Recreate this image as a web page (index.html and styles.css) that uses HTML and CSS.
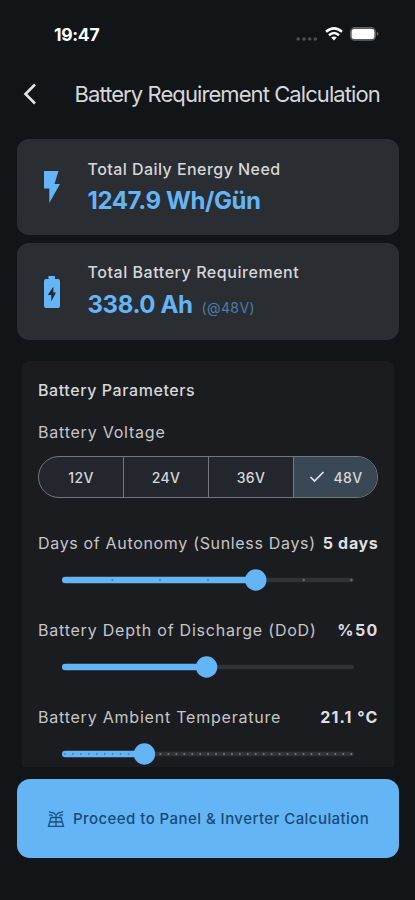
FILE: index.html
```html
<!DOCTYPE html>
<html lang="en">
<head>
<meta charset="utf-8">
<meta name="viewport" content="width=device-width, initial-scale=1">
<title>Battery Requirement Calculation</title>
<link rel="stylesheet" href="styles.css">
</head>
<body>
<div class="screen">
  <div class="status">
    <span class="time">19:47</span>
    <div class="signals">
      <svg class="dots" width="22" height="4" viewBox="0 0 22 4"><g fill="#4c5053"><circle cx="2.2" cy="2" r="1.8"/><circle cx="8" cy="2" r="1.8"/><circle cx="13.7" cy="2" r="1.8"/><circle cx="19.3" cy="2" r="1.8"/></g></svg>
      <svg class="wifi" width="18" height="14" viewBox="0 0 18 14" fill="none" stroke="#fff" stroke-width="2.5"><path d="M1 4.8Q9-2 17 4.8"/><path d="M4 8.2Q9 3.8 14 8.2"/><path d="M6.2 10.6Q9 8.2 11.8 10.6L9 13.5Z" fill="#fff" stroke="none"/></svg>
      <svg class="cell" width="29" height="14" viewBox="0 0 29 14"><rect x=".6" y=".6" width="24.8" height="12.6" rx="4" fill="none" stroke="#626568" stroke-width="1.1"/><rect x="1.5" y="1.7" width="23" height="10.6" rx="3" fill="#fff"/><path d="M26.8 4.8q3 2 0 4.2z" fill="#717476"/></svg>
    </div>
  </div>
  <header class="bar">
    <svg width="14" height="22" viewBox="0 0 14 22" fill="none" stroke="#e2e3e5" stroke-width="2.6"><path d="M12 1.5 2.5 11 12 20.5"/></svg>
    <h1>Battery Requirement Calculation</h1>
  </header>
  <main>
    <section class="card need">
      <svg class="icon" width="18" height="34" viewBox="0 0 18 34"><path d="M1 1H15.5L11.5 14H17L6.3 33V18.5H1Z" fill="#64b5f6"/></svg>
      <div><p class="label l1">Total Daily Energy Need</p><p class="value v1">1247.9 Wh/Gün</p></div>
    </section>
    <section class="card total">
      <svg class="icon" width="18" height="34" viewBox="0 0 18 34"><path d="M3 4H5.5V1H12V4H15Q17 4 17 6V31Q17 33 15 33H3Q1 33 1 31V6Q1 4 3 4Z" fill="#64b5f6"/><path d="M10.4 11.5 4.8 20H8.3V26.5L13 17.5H10.4Z" fill="#202a33"/></svg>
      <div><p class="label l2">Total Battery Requirement</p><p class="value v2">338.0 Ah<small>(@48V)</small></p></div>
    </section>
    <section class="panel">
      <h2>Battery Parameters</h2>
      <p class="field">Battery Voltage</p>
      <div class="segments">
        <span>12V</span><span>24V</span><span>36V</span><span class="on"><svg width="16" height="12" viewBox="0 0 16 12" fill="none" stroke="#e0e5ea" stroke-width="1.7"><path d="M1.5 6 5.5 10 14.5 1"/></svg>48V</span>
      </div>
      <div class="row r1"><span>Days of Autonomy (Sunless Days)</span><b>5 days</b></div>
      <svg class="slider" width="294" height="24" viewBox="0 0 294 24"><rect x="3" y="9.8" width="289" height="4.4" rx="2.2" fill="#303336"/><rect x="0" y="8.7" width="194" height="6.6" rx="3.3" fill="#64b5f6"/><g fill="#4485bb"><circle cx="50.5" cy="12" r="1.1"/><circle cx="98" cy="12" r="1.1"/><circle cx="146" cy="12" r="1.1"/></g><g fill="#686b6e"><circle cx="241.7" cy="12" r="1.2"/><circle cx="289.3" cy="12" r="1.2"/></g><circle cx="193.8" cy="12" r="10.7" fill="#64b5f6"/></svg>
      <div class="row r2"><span>Battery Depth of Discharge (DoD)</span><b>%50</b></div>
      <svg class="slider" width="294" height="24" viewBox="0 0 294 24"><rect x="3" y="9.8" width="289" height="4.4" rx="2.2" fill="#303336"/><rect x="0" y="8.7" width="145" height="6.6" rx="3.3" fill="#64b5f6"/><circle cx="144.6" cy="12" r="10.7" fill="#64b5f6"/></svg>
      <div class="row r3"><span>Battery Ambient Temperature</span><b>21.1 °C</b></div>
      <svg class="slider" width="294" height="24" viewBox="0 0 294 24"><rect x="3" y="9.8" width="289" height="4.4" rx="2.2" fill="#303336"/><path d="M3 12H291" stroke="#73777a" stroke-width="2.1" stroke-linecap="round" stroke-dasharray="0 7.95"/><rect x="0" y="8.7" width="82" height="6.6" rx="3.3" fill="#64b5f6"/><path d="M3 12H72" stroke="#4485bb" stroke-width="2" stroke-linecap="round" stroke-dasharray="0 7.95"/><circle cx="82.4" cy="12" r="10.7" fill="#64b5f6"/></svg>
    </section>
  </main>
  <button class="go">
    <svg width="18" height="18" viewBox="0 0 18 18" fill="none" stroke="#17507f" stroke-width="1.3"><path d="M2 1.5Q4 3 6 2.5L9 5 12 2.5Q14 3 16 1.5M2 5Q4 4.5 5.5 6M16 5Q14 4.5 12.5 6M9 4V16M4 7.5H14L16.5 16.3H1.5ZM3 12H15"/></svg>
    <span>Proceed to Panel &amp; Inverter Calculation</span>
  </button>
</div>
</body>
</html>
```
FILE: styles.css
```css
* { box-sizing: border-box; margin: 0; padding: 0; }
body { background: #111518; font-family: Inter, "Liberation Sans", sans-serif; color: #d6d7d9; }
svg { display: block; flex: none; }
.screen { width: 415px; height: 900px; overflow: hidden; display: flex; flex-direction: column; white-space: nowrap; }
.status { height: 68px; padding: 0 36px 0 54px; display: flex; align-items: center; justify-content: space-between; }
.time { font-size: 17.5px; font-weight: 700; color: #fff; letter-spacing: -.3px; }
.signals { display: flex; align-items: center; }
.dots { margin: 9px 7px 0 0; }
.wifi { margin-right: 7px; }
.bar { height: 71px; padding: 0 0 19px 23px; display: flex; align-items: center; gap: 37.5px; }
h1 { font-size: 22px; font-weight: 400; letter-spacing: -.92px; }
main { padding: 0 16px 0 17px; }
.card { height: 96px; border-radius: 12px; background: #2a2d32; display: flex; align-items: center; padding-left: 26px; gap: 26.5px; }
.total { height: 97px; margin-top: 8px; }
.label { font-size: 16px; font-weight: 500; line-height: 22px; letter-spacing: .45px; }
.l2 { letter-spacing: .55px; }
.value { font-size: 24px; font-weight: 700; line-height: 30px; margin-top: 6px; color: #64b5f6; display: flex; align-items: baseline; letter-spacing: -.4px; }
.v2 { margin-top: 7px; }
.value small { font-size: 14px; font-weight: 400; letter-spacing: .4px; color: #4a7da8; margin-left: 9px; }
.panel { height: 406px; margin: 21px 5px 0; padding: 18px 16px 0; background: #1b1c20; border-radius: 8px 8px 0 0; }
h2 { font-size: 16px; line-height: 22px; font-weight: 500; letter-spacing: .58px; }
.field, .row { font-size: 16px; line-height: 22px; letter-spacing: .78px; color: #c5c6c8; }
.field { margin-top: 20px; }
.segments { height: 42px; margin: 13px 0 0; display: grid; grid-template-columns: 84px 85px 85px 1fr; border: 1.3px solid #74777a; border-radius: 21px; overflow: hidden; background: #23272d; }
.segments span { display: flex; align-items: center; justify-content: center; font-size: 14px; font-weight: 500; letter-spacing: .3px; border-left: 1.3px solid #74777a; }
.segments span:first-child { border-left: 0; }
.segments .on { background: #3a4856; gap: 9px; }
.row { display: flex; justify-content: space-between; }
.row b { font-weight: 700; color: #dedfe1; margin-right: -.5px; }
.r1 { margin-top: 34px; letter-spacing: .67px; }
.r2, .r3 { margin-top: 27px; }
.r2 b { letter-spacing: 1.3px; }
.r3 b { letter-spacing: 1.1px; }
.slider { margin: 14px 0 0 24px; }
.go { width: 382px; height: 79px; margin: 12px 0 0 17px; border: 0; border-radius: 13px; background: #64b5f6; color: #154b79; display: flex; align-items: center; padding-left: 30px; gap: 8px; font-family: inherit; font-size: 15px; font-weight: 500; letter-spacing: .44px; }
```
